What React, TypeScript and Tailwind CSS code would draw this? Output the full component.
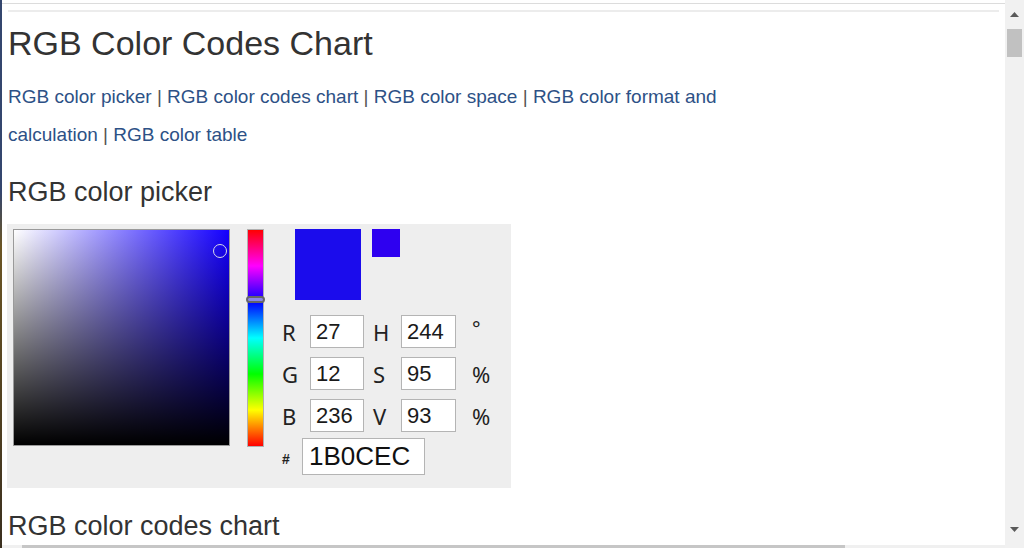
import React from "react";

const links = [
  "RGB color picker",
  "RGB color codes chart",
  "RGB color space",
  "RGB color format and calculation",
  "RGB color table",
];

const fields = [
  { a: "R", av: "27", b: "H", bv: "244", unit: "°" },
  { a: "G", av: "12", b: "S", bv: "95", unit: "%" },
  { a: "B", av: "236", b: "V", bv: "93", unit: "%" },
];

const Arrow: React.FC<{ down?: boolean }> = ({ down }) => (
  <svg width="9" height="5" viewBox="0 0 9 5" className="block">
    <polygon points={down ? "0,0 9,0 4.5,5" : "0,5 9,5 4.5,0"} fill="#5a5a5a" />
  </svg>
);

const Picker: React.FC = () => (
  <div className="-ml-px mt-[18px] flex w-[504px] bg-[#eeeeee] pb-[13px] pl-[6px] pt-[5px]">
    {/* saturation / value square */}
    <div className="relative h-[217px] w-[217px] border border-[#9a9a9a] bg-[linear-gradient(to_top,#000,transparent),linear-gradient(to_right,#fff,#1400ff)]">
      <div className="absolute left-[199px] top-[14px] h-[14px] w-[14px] rounded-full border-[1.5px] border-[#d8d8e8]" />
    </div>

    {/* hue bar */}
    <div className="relative ml-[17px] h-[218px] w-[17px] border border-[#b0b0b0] bg-[linear-gradient(to_bottom,#ff0000,#ff00ff,#0000ff,#00ffff,#00ff00,#ffff00,#ff0000)]">
      <div className="absolute -left-[2px] top-[66px] h-[7px] w-[19px] rounded-full border-2 border-[#666] bg-[#ddd]/60" />
    </div>

    {/* values */}
    <div className="ml-[18px] flex flex-col">
      <div className="ml-[13px] flex items-start gap-[11px]">
        <div className="h-[71px] w-[66px] bg-[#1B0CEC]" />
        <div className="h-[28px] w-[28px] bg-[#2e00f0]" />
      </div>

      <div className="mt-[15px] grid grid-cols-[28px_54px_37px_55px_auto] items-center gap-y-[9px]">
        {fields.map((f) => (
          <React.Fragment key={f.a}>
            <span className="font-['Noto_Sans',sans-serif] text-[22px] leading-none text-[#222]">{f.a}</span>
            <input
              readOnly
              value={f.av}
              className="h-[33px] w-[54px] border border-[#b4b4b4] bg-white pl-[5px] text-[22px] text-[#1a1a1a] outline-none"
            />
            <span className="pl-[9px] font-['Noto_Sans',sans-serif] text-[22px] leading-none text-[#222]">{f.b}</span>
            <input
              readOnly
              value={f.bv}
              className="h-[33px] w-[55px] border border-[#b4b4b4] bg-white pl-[5px] text-[22px] text-[#1a1a1a] outline-none"
            />
            <span
              className={`pl-[16px] font-['Noto_Sans',sans-serif] leading-none text-[#222] ${
                f.unit === "°" ? "-mt-[6px] text-[20px]" : "text-[22px]"
              }`}
            >
              {f.unit}
            </span>
          </React.Fragment>
        ))}
      </div>

      <div className="mt-[6px] flex items-center">
        <span className="w-[20px] pt-[6px] text-[14px] font-bold text-[#222]">#</span>
        <input
          readOnly
          value="1B0CEC"
          className="h-[37px] w-[123px] border border-[#b4b4b4] bg-white pl-[6px] text-[26px] text-[#111] outline-none"
        />
      </div>
    </div>
  </div>
);

export default function App() {
  return (
    <div className="flex h-[548px] w-[1024px] overflow-hidden bg-white font-['Liberation_Sans',Arial,sans-serif]">
      {/* window edge */}
      <div className="w-[2px] bg-[linear-gradient(to_bottom,#34466e_0%,#34466e_35%,#6b5524_45%,#3a2f1f_100%)]" />

      <div className="flex min-w-0 flex-1 flex-col">
        <div className="h-[4px] border-b border-[#dcdcdc]" />

        <main className="min-h-0 flex-1 overflow-hidden pl-[6px]">
          <div className="mt-[6px] h-[2px] w-[991px] bg-[#ececec]" />

          <h1 className="mt-[14px] text-[34px] leading-[34px] text-[#333]">RGB Color Codes Chart</h1>

          <p className="mt-[18px] w-[730px] text-[19px] leading-[38px] text-[#555]">
            {links.map((l, i) => (
              <React.Fragment key={l}>
                {i > 0 && <span> | </span>}
                <a className="text-[#2d5186]">{l}</a>
              </React.Fragment>
            ))}
          </p>

          <h2 className="mt-[25px] text-[27px] leading-[27px] text-[#333]">RGB color picker</h2>

          <Picker />

          <h2 className="mt-[25px] text-[27px] leading-[27px] text-[#333]">RGB color codes chart</h2>
        </main>

        {/* horizontal scrollbar */}
        <div className="flex h-[3px] bg-[#f0f0f0] pl-[20px]">
          <div className="h-full w-[823px] bg-[#c6c6c6]" />
        </div>
      </div>

      {/* vertical scrollbar */}
      <div className="flex w-[19px] flex-col items-center bg-[#f1f1f1]">
        <div className="mt-[12px]">
          <Arrow />
        </div>
        <div className="mt-[12px] h-[28px] w-[15px] bg-[#c1c1c1]" />
        <div className="flex-1" />
        <div className="mb-[16px]">
          <Arrow down />
        </div>
      </div>
    </div>
  );
}
